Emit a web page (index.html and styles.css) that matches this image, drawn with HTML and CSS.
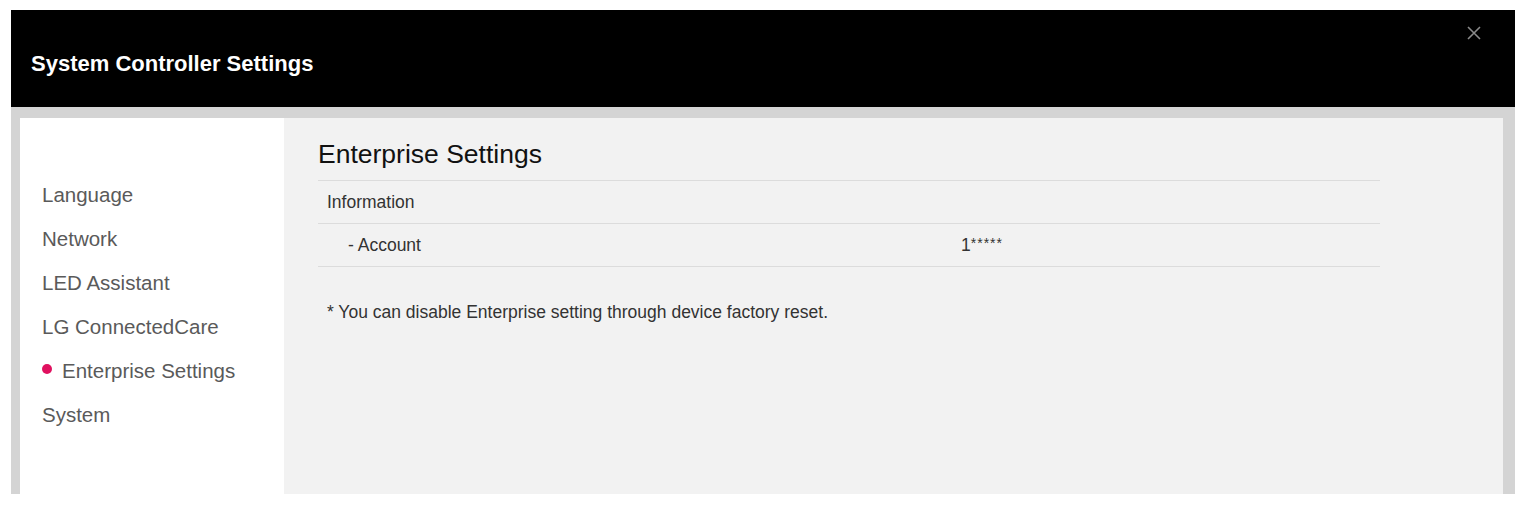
FILE: index.html
```html
<!DOCTYPE html>
<html>
<head>
<meta charset="utf-8">
<title>System Controller Settings</title>
<link rel="stylesheet" href="styles.css">
</head>
<body>
<div class="dialog">
  <header class="dialog-header">
    <h1 class="dialog-title">System Controller Settings</h1>
    <button class="close-btn" aria-label="Close">
      <svg width="14" height="14" viewBox="0 0 14 14"><path d="M1 1L13 13M13 1L1 13" stroke="#8a8a8a" stroke-width="1.6" fill="none"/></svg>
    </button>
  </header>
  <div class="dialog-body">
    <nav class="side-nav">
      <a class="nav-item">Language</a>
      <a class="nav-item">Network</a>
      <a class="nav-item">LED Assistant</a>
      <a class="nav-item">LG ConnectedCare</a>
      <a class="nav-item active"><span class="dot"></span>Enterprise Settings</a>
      <a class="nav-item">System</a>
    </nav>
    <main class="content">
      <h2 class="content-title">Enterprise Settings</h2>
      <div class="table">
        <div class="row"><span class="cell-label">Information</span></div>
        <div class="row"><span class="cell-label sub">- Account</span><span class="cell-value">1<sup>*****</sup></span></div>
      </div>
      <p class="note">* You can disable Enterprise setting through device factory reset.</p>
    </main>
  </div>
</div>
</body>
</html>
```

FILE: styles.css
```css
html, body {
  margin: 0;
  padding: 0;
  background: #ffffff;
  font-family: "Liberation Sans", Arial, sans-serif;
}

.dialog {
  margin: 10px 15px 0 11px;
  display: flex;
  flex-direction: column;
}

.dialog-header {
  position: relative;
  background: #000000;
  height: 97px;
  display: flex;
  align-items: center;
  padding-left: 20px;
}

.dialog-title {
  margin: 10px 0 0 0;
  color: #ffffff;
  font-size: 22px;
  font-weight: bold;
}

.close-btn {
  position: absolute;
  top: 16px;
  right: 34px;
  background: none;
  border: 0;
  padding: 0;
  width: 14px;
  height: 14px;
  cursor: pointer;
}

.close-btn svg { display: block; }

.dialog-body {
  background: #d4d4d4;
  padding: 11px 12px 0 9px;
  display: flex;
  height: 376px;
}

.side-nav {
  width: 264px;
  background: #ffffff;
  display: flex;
  flex-direction: column;
  padding: 55px 0 0 22px;
  box-sizing: border-box;
}

.nav-item {
  display: flex;
  align-items: center;
  height: 44px;
  font-size: 20.5px;
  color: #5a5a5a;
  text-decoration: none;
}

.nav-item .dot {
  width: 10px;
  height: 10px;
  border-radius: 50%;
  background: #e0115f;
  margin: -4px 10px 0 0;
}

.content {
  flex: 1;
  background: #f2f2f2;
  padding: 21px 123px 0 34px;
}

.content-title {
  margin: 0;
  font-size: 26.5px;
  font-weight: normal;
  color: #111111;
  height: 41px;
  line-height: 30px;
}

.table {
  border-top: 1px solid #dcdcdc;
}

.row {
  display: flex;
  align-items: center;
  height: 42px;
  border-bottom: 1px solid #dcdcdc;
  font-size: 17.5px;
  color: #333333;
}

.cell-label {
  padding-left: 9px;
  width: 634px;
}

.cell-label.sub {
  padding-left: 30px;
  width: 613px;
}

.cell-value sup {
  font-size: 14px;
  vertical-align: 3px;
  letter-spacing: 1px;
}

.note {
  margin: 35px 0 0 9px;
  font-size: 17.5px;
  color: #333333;
}
```
